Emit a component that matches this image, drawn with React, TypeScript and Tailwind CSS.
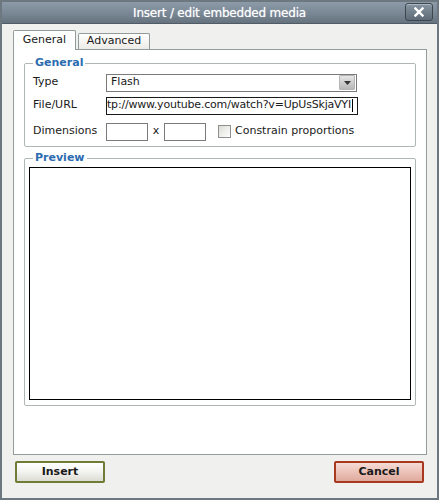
export default function App() {
  const font = "font-['DejaVu_Sans',Verdana,sans-serif]";
  return (
    <div className={`flex h-[500px] w-[439px] flex-col border-2 border-[#6c7780] bg-[#f0f0ee] text-[11px] text-[#1a1a1a] ${font}`}>
      {/* title bar */}
      <div className="relative flex h-[22px] shrink-0 items-center justify-center border-b border-[#4f5b66] bg-gradient-to-b from-[#8d9ba8] via-[#7b8996] to-[#66737f]">
        <span className="text-[12px] tracking-[-0.2px] text-white [text-shadow:0_0_1px_rgba(255,255,255,0.6)]">Insert / edit embedded media</span>
        <div className="absolute right-[4px] top-[1px] flex h-[18px] w-[28px] items-center justify-center rounded-[3px] border border-[#3d4750] bg-gradient-to-b from-[#8795a2] to-[#5e6b77] shadow-[inset_0_1px_0_rgba(255,255,255,0.35)]">
          <svg width="10" height="10" viewBox="0 0 10 10">
            <path d="M1.5 1.5 L8.5 8.5 M8.5 1.5 L1.5 8.5" stroke="white" strokeWidth="2.4" strokeLinecap="square" />
          </svg>
        </div>
      </div>

      <div className="flex flex-1 flex-col px-[11px] pt-[6px]">
        {/* tabs */}
        <div className="flex items-end gap-[2px]">
          <div className="relative z-10 -mb-px flex h-[20px] w-[63px] items-center justify-center rounded-t-[2px] border border-b-0 border-[#919b9c] bg-white">
            General
          </div>
          <div className="flex h-[16px] w-[72px] items-center justify-center rounded-t-[2px] border border-b-0 border-[#919b9c] bg-gradient-to-b from-white to-[#ecebe6]">
            Advanced
          </div>
        </div>

        {/* panel */}
        <div className="flex h-[406px] w-[414px] flex-col border border-[#919b9c] bg-white px-[10px] pt-[5px]">
          <fieldset className="h-[92px] rounded-[2px] border border-[#b0b6b8] px-[8px] pb-0 pt-0">
            <legend className="px-[2px] font-bold text-[#2b6cb0]">General</legend>
            <div className="mt-[2px] flex h-[18px] items-center">
              <span className="w-[73px]">Type</span>
              <div className="flex h-[18px] w-[251px] items-center border border-[#7a7a7a] bg-white">
                <span className="flex-1 pl-[4px]">Flash</span>
                <div className="mr-px flex h-[15px] w-[16px] items-center justify-center rounded-[1px] border border-[#b5b5b5] bg-gradient-to-b from-[#e6e6e6] to-[#b8b8b8]">
                  <svg width="7" height="4" viewBox="0 0 7 4">
                    <path d="M0 0 H7 L3.5 4 Z" fill="#333" />
                  </svg>
                </div>
              </div>
            </div>
            <div className="mt-[5px] flex h-[18px] items-center">
              <span className="w-[73px]">File/URL</span>
              <div className="flex h-[18px] w-[252px] items-center overflow-hidden whitespace-nowrap border border-[#1a1a1a] bg-white">
                <span className="tracking-[-0.2px]">tp://www.youtube.com/watch?v=UpUsSkjaVYI</span>
                <span className="ml-px h-[13px] w-px shrink-0 bg-black" />
              </div>
            </div>
            <div className="mt-[8px] flex h-[18px] items-center">
              <span className="w-[73px]">Dimensions</span>
              <div className="h-[18px] w-[42px] border border-[#7a7a7a] bg-white" />
              <span className="w-[16px] text-center">x</span>
              <div className="h-[18px] w-[42px] border border-[#7a7a7a] bg-white" />
              <div className="ml-[12px] h-[13px] w-[13px] border border-[#8e8f8f] bg-gradient-to-br from-[#dcdcd6] to-white" />
              <span className="ml-[4px]">Constrain proportions</span>
            </div>
          </fieldset>

          <fieldset className="mt-[3px] rounded-[2px] border border-[#b0b6b8] px-[4px] pb-[5px] pt-0">
            <legend className="ml-[4px] px-[2px] font-bold text-[#2b6cb0]">Preview</legend>
            <div className="h-[233px] w-full border border-black bg-white" />
          </fieldset>
        </div>

        {/* buttons */}
        <div className="mt-[6px] flex justify-between px-[2px]">
          <button className="h-[22px] w-[90px] rounded-[2px] border-2 border-[#6f7c34] bg-gradient-to-b from-white via-[#f3f3ef] to-[#dcdcd4] font-bold text-[#1a1a1a]">
            Insert
          </button>
          <button className="h-[22px] w-[90px] rounded-[2px] border-2 border-[#a8391f] bg-gradient-to-b from-[#f6dcd6] via-[#ecc2b8] to-[#dfaa9d] font-bold text-[#1a1a1a]">
            Cancel
          </button>
        </div>
      </div>
    </div>
  );
}
